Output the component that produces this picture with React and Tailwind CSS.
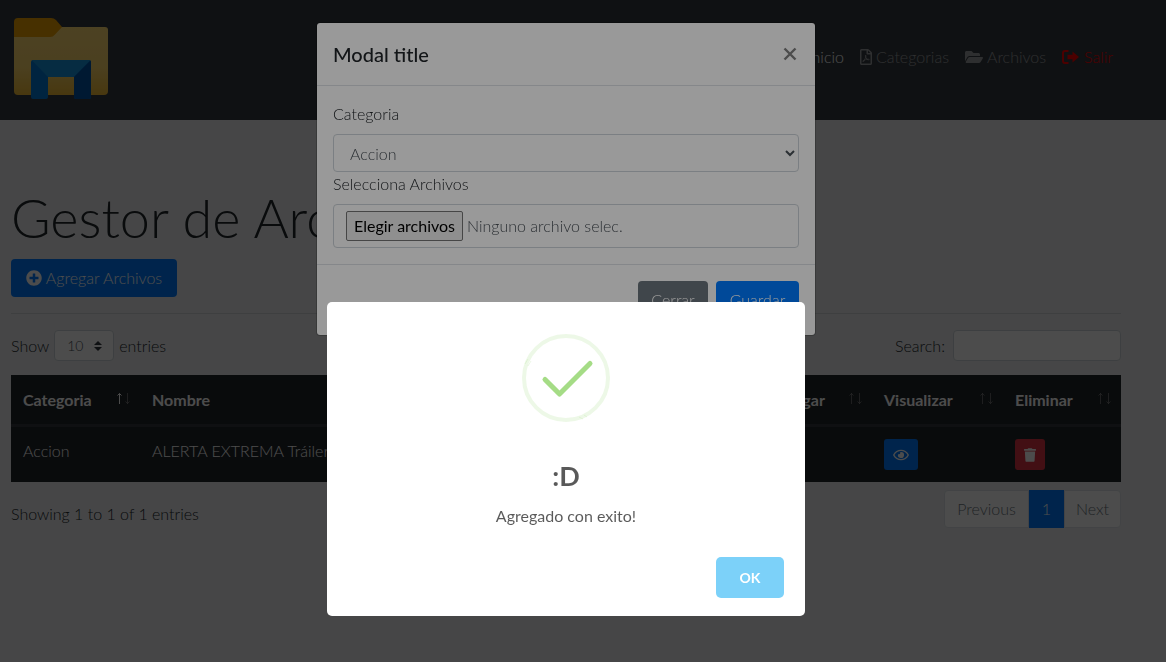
import { FaFolderOpen, FaPlusCircle, FaRegEye, FaRegFilePdf, FaTrash, FaHome } from 'react-icons/fa';

function Logo() {
  return (
    <svg className="h-24 w-[100px]" viewBox="0 0 100 96" role="img" aria-label="Gestor">
      <defs>
        <linearGradient id="folder" x1="0" y1="0" x2="0" y2="1">
          <stop offset="0" stopColor="#ffdc75" />
          <stop offset="0.6" stopColor="#fbd56a" />
          <stop offset="1" stopColor="#f0bb35" />
        </linearGradient>
      </defs>
      <path d="M3 15H94a3 3 0 0 1 3 3V79a4 4 0 0 1-4 4H7a4 4 0 0 1-4-4Z" fill="url(#folder)" />
      <path d="M3 10a4 4 0 0 1 4-4H40q3 0 5 2L51 15 44 22.500q-2 2.500-5 2.500H3Z" fill="#eda000" />
      <path d="M20 50q0-2 2-2H78q2 0 2 2V85q0 2-2 2H65q-2 0-2-2V65H37V85q0 2-2 2H22q-2 0-2-2Z" fill="#007bd8" />
      <path d="M21 48.500 22 48H78L79 48.500 63 65H37Z" fill="#1793dc" />
      <path d="M79.500 48.500q.5.700.5 1.500V85q0 2-2 2H65q-2 0-2-2V65Z" fill="#0055a8" />
    </svg>
  );
}

function SignOutIcon() {
  return (
    <svg className="h-4 w-[18px]" viewBox="0 0 18 16" fill="currentColor" aria-hidden="true">
      <path d="M6.500 2H3Q1 2 1 4v8q0 2 2 2h3.500" fill="none" stroke="currentColor" strokeWidth="2" />
      <path d="M10.500 2.500 17 8l-6.500 5.500V10.200H5.500V5.800h5z" />
    </svg>
  );
}

function SortArrows({ up = 'opacity-30' }) {
  return (
    <svg className="mt-[3px] -mr-[3px] h-4 w-4" viewBox="0 0 16 16" fill="none" stroke="currentColor" aria-hidden="true">
      <path className={up} d="M4.500 13V2.500M2.500 4.500l2-2 2 2" />
      <path className="opacity-30" d="M12.500 2v10.500M10.500 10.500l2 2 2-2" />
    </svg>
  );
}

function Th({ children, className = '', up }) {
  return (
    <th scope="col" className={`border-b-2 border-[#32383e] px-3 pt-[13px] pb-3 text-left font-bold ${className}`}>
      <div className="flex items-start justify-between">
        {children}
        <SortArrows up={up} />
      </div>
    </th>
  );
}

function Page() {
  return (
    <div className="min-h-screen bg-[#e9ecef]">
      <header className="bg-[#343a40] pr-[34px]">
        <div className="mx-auto flex max-w-[1110px] items-start justify-between py-3">
          <a href="#inicio"><Logo /></a>
          <nav className="mt-[25px] flex text-white/50">
            <a href="#inicio" className="flex items-center gap-1 p-2 text-white"><FaHome />Inicio</a>
            <a href="#categorias" className="flex items-center gap-1 p-2"><FaRegFilePdf className="h-4 w-3" />Categorias</a>
            <a href="#archivos" className="flex items-center gap-1 p-2"><FaFolderOpen className="h-4 w-[18px]" />Archivos</a>
            <a href="#salir" className="flex items-center gap-1 p-2 text-[#ff0000]"><SignOutIcon />Salir</a>
          </nav>
        </div>
      </header>
      <div className="pt-16 pr-[34px]">
        <main className="mx-auto max-w-[1110px]">
          <h1 className="mb-2 text-[54px] leading-[67px]">Gestor de Archivos</h1>
          <button className="flex h-[38px] min-w-[166px] items-center justify-center gap-1 rounded bg-[#007bff] px-3 text-white">
            <FaPlusCircle />Agregar Archivos
          </button>
          <hr className="my-4 border-black/10" />
          <div className="flex items-center justify-between">
            <label className="flex items-center gap-[5px]">
              Show
              <span className="relative">
                <select className="h-[31px] w-[60px] appearance-none rounded border border-[#ced4da] bg-white pl-3 text-sm text-[#495057]">
                  <option>10</option>
                </select>
                <svg className="pointer-events-none absolute top-[10px] right-3 h-3 w-2" viewBox="0 0 8 10" fill="#343a40" aria-hidden="true">
                  <path d="M4 0 0 4h8zM4 10 0 6h8z" />
                </svg>
              </span>
              entries
            </label>
            <label className="flex items-center gap-2">
              Search:
              <input type="search" className="h-[31px] w-[168px] rounded border border-[#ced4da] bg-white px-2 text-sm" />
            </label>
          </div>
          <table className="mt-[14px] w-full table-fixed border-separate border-spacing-0 bg-[#212529] text-white">
            <thead>
              <tr>
                <Th className="w-[129px]" up="opacity-100">Categoria</Th>
                <Th>Nombre</Th>
                <Th className="w-[131px]">Descargar</Th>
                <Th className="w-[131px]">Visualizar</Th>
                <Th className="w-[118px]">Eliminar</Th>
              </tr>
            </thead>
            <tbody>
              <tr className="align-top">
                <td className="border-t border-[#32383e] p-3">Accion</td>
                <td className="border-t border-[#32383e] p-3">ALERTA EXTREMA Tráiler</td>
                <td className="border-t border-[#32383e] p-3" />
                <td className="border-t border-[#32383e] p-3">
                  <button aria-label="Visualizar" className="flex h-[31px] w-[34px] items-center justify-center rounded-[3px] bg-[#007bff]">
                    <FaRegEye className="h-[14px] w-4" />
                  </button>
                </td>
                <td className="border-t border-[#32383e] p-3">
                  <button aria-label="Eliminar" className="flex h-[31px] w-[30px] items-center justify-center rounded-[3px] bg-[#dc3545]">
                    <FaTrash className="h-[14px] w-3" />
                  </button>
                </td>
              </tr>
            </tbody>
          </table>
          <div className="mt-2 flex items-center justify-between">
            <p className="pt-[10px]">Showing 1 to 1 of 1 entries</p>
            <div className="flex h-[38px] text-[#6c757d]">
              <button className="w-[85px] rounded-l border border-[#dee2e6] bg-white">Previous</button>
              <button className="w-[35px] bg-[#007bff] text-white">1</button>
              <button className="w-[57px] rounded-r border border-[#dee2e6] bg-white">Next</button>
            </div>
          </div>
        </main>
      </div>
    </div>
  );
}

function UploadModal() {
  return (
    <div className="fixed inset-0 bg-black/50 pt-[22px] pr-[34px]">
      <div role="dialog" aria-labelledby="upload-title" className="mx-auto max-w-[500px] rounded border border-black/20 bg-white bg-clip-padding">
        <div className="flex items-start justify-between border-b border-[#dee2e6] p-4">
          <h2 id="upload-title" className="text-xl leading-[30px] font-medium">Modal title</h2>
          <button aria-label="Close" className="text-[#7f7f7f]">
            <svg className="h-7 w-4" viewBox="0 0 16 28" fill="none" stroke="currentColor" strokeWidth="2.400" aria-hidden="true">
              <path d="M1.500 9.500l11 11M12.500 9.500l-11 11" />
            </svg>
          </button>
        </div>
        <div className="p-4">
          <label htmlFor="categoria" className="mb-2 block">Categoria</label>
          <select id="categoria" className="block h-[38px] w-full rounded border border-[#ced4da] bg-white px-3 text-[#495057]">
            <option>Accion</option>
          </select>
          <label htmlFor="archivos" className="mb-2 block">Selecciona Archivos</label>
          <input id="archivos" type="file" multiple className="sr-only" />
          <label htmlFor="archivos" className="flex h-11 items-center gap-1 rounded border border-[#ced4da] px-3 text-[#495057]">
            <span className="rounded-[2px] border border-[#767676] bg-[#efefef] px-[7px] py-[2px] font-normal text-black">Elegir archivos</span>
            Ninguno archivo selec.
          </label>
        </div>
        <div className="flex justify-end gap-2 border-t border-[#dee2e6] p-4 text-white">
          <button className="h-[38px] w-[70px] rounded bg-[#6c757d]">Cerrar</button>
          <button className="h-[38px] w-[83px] rounded bg-[#007bff]">Guardar</button>
        </div>
      </div>
    </div>
  );
}

function SuccessAlert() {
  return (
    <div className="fixed inset-0 bg-black/40 pt-[302px] pr-[34px]">
      <div role="alertdialog" aria-labelledby="alert-title" className="mx-auto flex max-w-[478px] flex-col items-center rounded-[5px] bg-white pt-8 text-center text-black/65">
        <svg className="size-[88px]" viewBox="0 0 88 88" fill="none" aria-hidden="true">
          <circle cx="44" cy="44" r="42" stroke="#a5dc86" strokeOpacity="0.2" strokeWidth="4" />
          <path d="M23 45.500 37.500 60 68 29.500" stroke="#a5dc86" strokeWidth="5" strokeLinecap="round" strokeLinejoin="round" />
          <path d="M3 30l3-5M6 32l3-5M57 83l4 2M62 81l3 2" stroke="#a5dc86" strokeOpacity="0.4" strokeWidth="0.500" />
        </svg>
        <h2 id="alert-title" className="mt-9 text-[27px] leading-9 font-bold">:D</h2>
        <p className="mt-[10px] font-normal">Agregado con exito!</p>
        <button className="mt-[29px] mr-[21px] mb-[18px] h-[41px] w-[68px] self-end rounded-[5px] bg-[#7cd1f9] text-sm font-bold text-white">OK</button>
      </div>
    </div>
  );
}

export default function App() {
  return (
    <div className="font-[Lato,'Open_Sans',sans-serif] text-base font-light text-[#212529]">
      <Page />
      <UploadModal />
      <SuccessAlert />
    </div>
  );
}
